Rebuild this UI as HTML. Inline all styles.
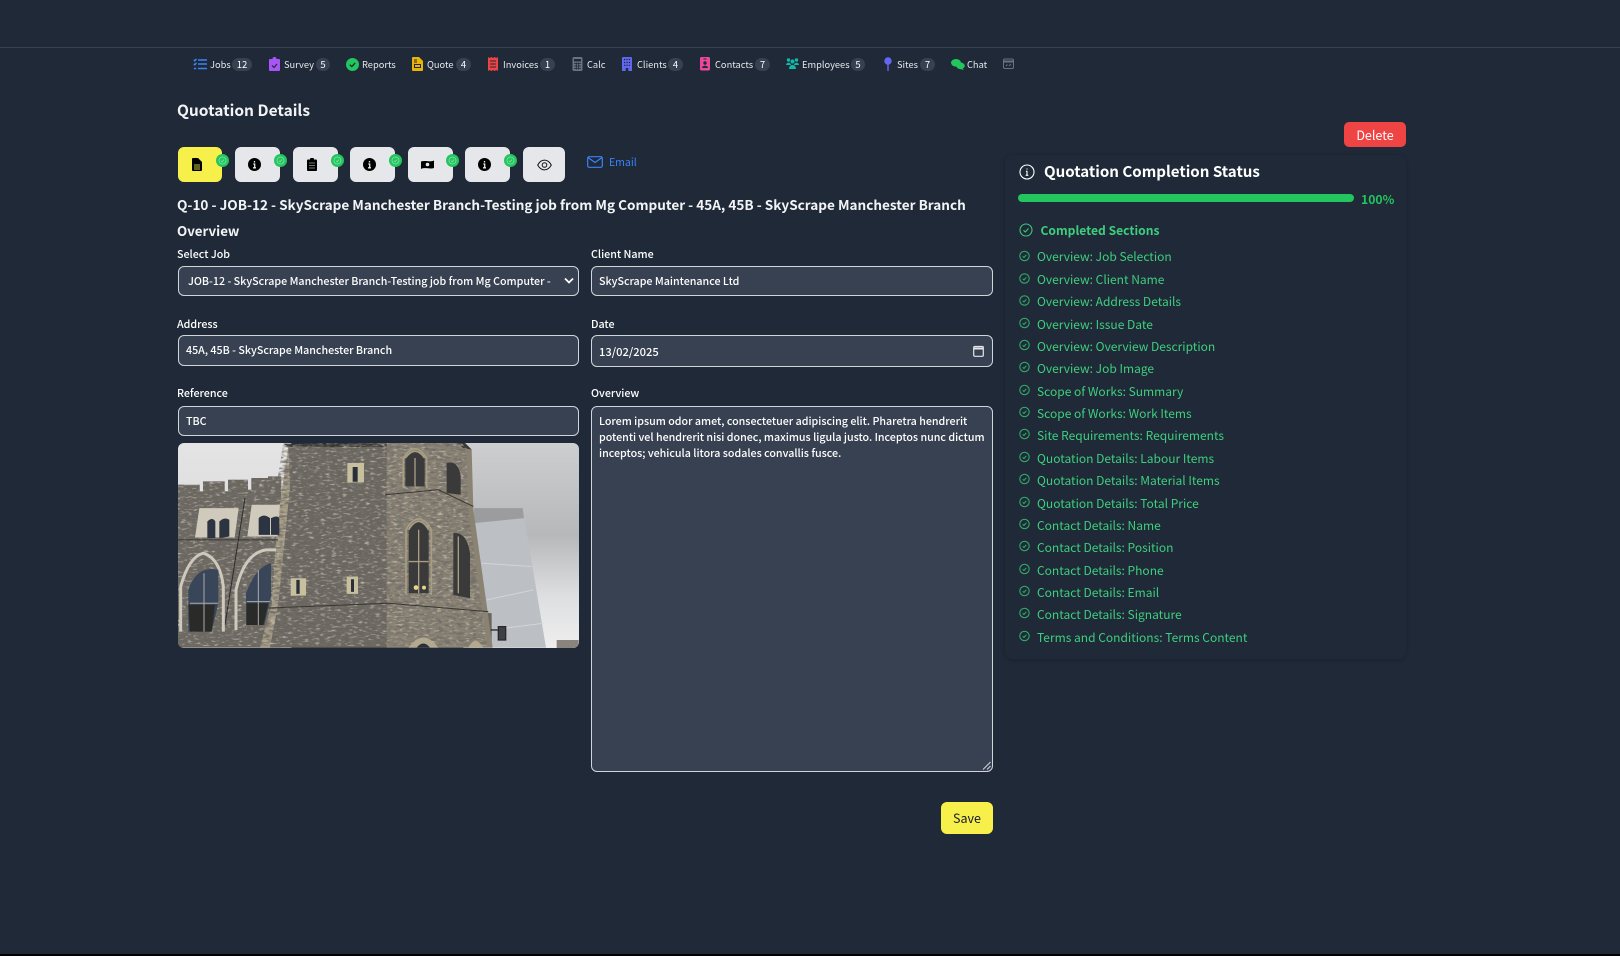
<!DOCTYPE html>
<html lang="en"><head><meta charset="utf-8"><title>Quotation Details</title>
<style>
*{box-sizing:border-box}
html,body{margin:0;padding:0;width:1620px;height:956px;overflow:hidden;background:#000}
body{font-family:"Noto Sans CJK JP","Liberation Sans",sans-serif;color:#fff}
#p{position:absolute;left:0;top:0;width:1620px;height:954px;background:#1f2937;overflow:hidden}
.a{position:absolute;white-space:nowrap;line-height:1}
.nt{font-size:9.3px;color:#e5e7eb;top:60px}
.bd{position:absolute;top:58px;height:13px;border-radius:7px;background:#374151;color:#fff;font-size:9.5px;line-height:13px;text-align:center}
.ic{position:absolute}
.lb{font-size:10.7px;font-weight:500;color:#fff}
.f{position:absolute;background:#374151;border:1px solid #d1d5db;border-radius:6px;color:#fff;font-size:10.7px;font-weight:500;line-height:1}
.f span{position:absolute;white-space:nowrap}
.tb{position:absolute;top:147px;height:35px;background:#e5e7eb;border-radius:6px}
.ck{position:absolute;top:153.5px;width:13px;height:13px;border-radius:50%;background:#22c55e}
.li{position:absolute;left:1037px;font-size:12px;color:#3ecf7e;white-space:nowrap;line-height:1}
</style></head><body><div id="p">
<div style="position:absolute;left:0;top:47px;width:1620px;height:1px;background:#374151"></div>

<!-- NAV -->
<svg class="ic" style="left:193px;top:58px" width="14" height="12" viewBox="0 0 14 12" fill="none" stroke="#3b82f6" stroke-width="1.5"><path d="M5 2h9M5 6h9M5 10.500h9M.8 1.800l1 1L3.500.8M.8 5.800l1 1 1.700-2M.8 10.500h2.500"/></svg>
<div class="a nt" style="left:210px">Jobs</div><div class="bd" style="left:232px;width:20px">12</div>
<svg class="ic" style="left:269px;top:57px" width="11" height="14" viewBox="0 0 11 14"><path d="M1 2h2.500a2 2 0 0 1 4 0H10a1 1 0 0 1 1 1v10a1 1 0 0 1-1 1H1a1 1 0 0 1-1-1V3a1 1 0 0 1 1-1z" fill="#a855f7"/><path d="M3 8.500l2 2 3-3.500" stroke="#1f2937" stroke-width="1.200" fill="none"/></svg>
<div class="a nt" style="left:284px">Survey</div><div class="bd" style="left:316px;width:14px">5</div>
<svg class="ic" style="left:346px;top:58px" width="13" height="13" viewBox="0 0 13 13"><circle cx="6.500" cy="6.500" r="6.500" fill="#22c55e"/><path d="M3.800 6.700l2 1.900 3.400-3.700" stroke="#1f2937" stroke-width="1.300" fill="none"/></svg>
<div class="a nt" style="left:362px">Reports</div>
<svg class="ic" style="left:412px;top:57px" width="11" height="14" viewBox="0 0 11 14"><path d="M1 0h6l4 4v9a1 1 0 0 1-1 1H1a1 1 0 0 1-1-1V1a1 1 0 0 1 1-1z" fill="#eab308"/><path d="M2 3h3M2 5h3M2.500 7.500h6v3h-6z" stroke="#1f2937" stroke-width="1" fill="none"/></svg>
<div class="a nt" style="left:427px">Quote</div><div class="bd" style="left:456px;width:15px">4</div>
<svg class="ic" style="left:488px;top:57px" width="10" height="14" viewBox="0 0 10 14"><path d="M0 0l1.700 1L3.300 0 5 1l1.700-1 1.600 1L10 0v14l-1.700-1-1.600 1L5 13l-1.700 1-1.600-1L0 14z" fill="#ef4444"/><path d="M2 4h6M2 7h6M2 10h6" stroke="#1f2937" stroke-width="1"/></svg>
<div class="a nt" style="left:503px">Invoices</div><div class="bd" style="left:540px;width:15px">1</div>
<svg class="ic" style="left:572px;top:57px" width="11" height="14" viewBox="0 0 11 14"><rect width="10" height="14" x=".5" rx="1.500" fill="#6b7280"/><rect x="2" y="2" width="7" height="2.500" fill="#1f2937"/><path d="M2 6.500h7M2 9h7M2 11.500h7M4.300 5.500v7M6.700 5.500v7" stroke="#1f2937" stroke-width=".8"/></svg>
<div class="a nt" style="left:587px">Calc</div>
<svg class="ic" style="left:622px;top:57px" width="10" height="14" viewBox="0 0 10 14"><path d="M1 0h8a1 1 0 0 1 1 1v13H6.300v-3H3.700v3H0V1a1 1 0 0 1 1-1z" fill="#6366f1"/><path d="M2 2.500h1.300M4.400 2.500h1.300M6.800 2.500h1.300M2 5.500h1.300M4.400 5.500h1.300M6.800 5.500h1.300M2 8.300h1.300M4.400 8.300h1.300M6.800 8.300h1.300" stroke="#1f2937" stroke-width="1.200"/></svg>
<div class="a nt" style="left:637px">Clients</div><div class="bd" style="left:668px;width:15px">4</div>
<svg class="ic" style="left:700px;top:57px" width="10" height="14" viewBox="0 0 10 14"><rect width="10" height="13.500" rx="1.500" fill="#ec4899"/><rect x="3.500" y="1.500" width="3" height="1" fill="#1f2937"/><circle cx="5" cy="6" r="1.700" fill="#1f2937"/><path d="M2 11c0-3 6-3 6 0z" fill="#1f2937"/></svg>
<div class="a nt" style="left:715px">Contacts</div><div class="bd" style="left:755px;width:15px">7</div>
<svg class="ic" style="left:786px;top:58px" width="13" height="11" viewBox="0 0 13 11" fill="#14b8a6"><circle cx="2.500" cy="2" r="1.700"/><circle cx="10.500" cy="2" r="1.700"/><circle cx="6.500" cy="3.500" r="2"/><path d="M0 7c0-3 5-3 5 0zM8 7c0-3 5-3 5 0zM3 11c0-5.500 7-5.500 7 0z"/></svg>
<div class="a nt" style="left:802px">Employees</div><div class="bd" style="left:851px;width:14px">5</div>
<svg class="ic" style="left:884px;top:57px" width="8" height="14" viewBox="0 0 8 14"><circle cx="4" cy="4" r="3.700" fill="#6366f1"/><rect x="3.300" y="7" width="1.400" height="7" fill="#6366f1"/></svg>
<div class="a nt" style="left:897px">Sites</div><div class="bd" style="left:920px;width:15px">7</div>
<svg class="ic" style="left:951px;top:59px" width="14" height="11" viewBox="0 0 14 11" fill="#22c55e"><ellipse cx="5" cy="3.800" rx="5" ry="3.800"/><ellipse cx="9.500" cy="6.800" rx="4.300" ry="3.300"/><path d="M11 9l2 2-4-1z"/></svg>
<div class="a nt" style="left:967px">Chat</div>
<svg class="ic" style="left:1003px;top:58px" width="11" height="11" viewBox="0 0 11 11" fill="none" stroke="#6b7280"><rect x=".5" y="1" width="10" height="9.500" rx="1.500"/><path d="M1 3.500h9" stroke-width="2"/><path d="M3 8l1.500-1.500M6 8l2-2"/></svg>

<div class="a" style="left:177px;top:103px;font-size:15.500px;font-weight:700;color:#f3f4f6">Quotation Details</div>

<!-- TABS -->
<div class="tb" style="left:178px;width:44px;background:#f8f04a"></div>
<div class="tb" style="left:235px;width:45px"></div>
<div class="tb" style="left:293px;width:45px"></div>
<div class="tb" style="left:350px;width:45px"></div>
<div class="tb" style="left:408px;width:45px"></div>
<div class="tb" style="left:465px;width:45px"></div>
<div class="tb" style="left:523px;width:42px"></div>
<svg class="ic" style="left:191.500px;top:157.500px" width="10" height="13" viewBox="0 0 10 13"><path d="M1 0h5l4 4v8a1 1 0 0 1-1 1H1a1 1 0 0 1-1-1V1a1 1 0 0 1 1-1z"/><path d="M2 7h6M2 9h6M2 11h6" stroke="#c4bd3c"/></svg>
<svg class="ic" style="left:248px;top:158px" width="13" height="13" viewBox="0 0 13 13"><circle cx="6.500" cy="6.500" r="6.500"/><path d="M6.500 3v1.500M5.300 6h1.400v3.500M5 9.800h3" stroke="#e5e7eb" stroke-width="1.300" fill="none"/></svg>
<svg class="ic" style="left:307px;top:158px" width="10" height="13" viewBox="0 0 10 13"><path d="M1 1.500h2a2 2 0 0 1 4 0h2a1 1 0 0 1 1 1V12a1 1 0 0 1-1 1H1a1 1 0 0 1-1-1V2.500a1 1 0 0 1 1-1z"/><path d="M2 5h6M2 7.500h6M2 10h6" stroke="#777" stroke-width=".9"/></svg>
<svg class="ic" style="left:363px;top:158px" width="13" height="13" viewBox="0 0 13 13"><circle cx="6.500" cy="6.500" r="6.500"/><path d="M6.500 3v1.500M5.300 6h1.400v3.500M5 9.800h3" stroke="#e5e7eb" stroke-width="1.300" fill="none"/></svg>
<svg class="ic" style="left:421px;top:160px" width="13" height="9" viewBox="0 0 13 9"><path d="M0 1.500c4-1.500 9 1 13-1V8c-4 1.500-9-1-13 1z"/><circle cx="6.500" cy="4.500" r="1.800" fill="#e5e7eb"/></svg>
<svg class="ic" style="left:478px;top:158px" width="13" height="13" viewBox="0 0 13 13"><circle cx="6.500" cy="6.500" r="6.500"/><path d="M6.500 3v1.500M5.300 6h1.400v3.500M5 9.800h3" stroke="#e5e7eb" stroke-width="1.300" fill="none"/></svg>
<svg class="ic" style="left:536.500px;top:159px" width="15" height="12" viewBox="0 0 15 12" fill="none" stroke="#111" stroke-width="1"><path d="M.7 6c3.500-6.500 10-6.500 13.600 0-3.600 6.500-10.100 6.500-13.600 0z"/><circle cx="7.500" cy="6" r="2.300"/></svg>
<div class="ck" style="left:216px"></div><div class="ck" style="left:274px"></div><div class="ck" style="left:331px"></div><div class="ck" style="left:389px"></div><div class="ck" style="left:446px"></div><div class="ck" style="left:504px"></div>
<svg class="ic" style="left:216px;top:153.500px" width="299" height="13" viewBox="0 0 299 13" fill="none" stroke="#8ce0ae" stroke-width=".8"><g id="c"><circle cx="6.500" cy="6.500" r="3.500"/><path d="M5 6.800l1.200 1L8 5.500"/></g><g transform="translate(58)"><circle cx="6.500" cy="6.500" r="3.500"/><path d="M5 6.800l1.200 1L8 5.500"/></g><g transform="translate(115)"><circle cx="6.500" cy="6.500" r="3.500"/><path d="M5 6.800l1.200 1L8 5.500"/></g><g transform="translate(173)"><circle cx="6.500" cy="6.500" r="3.500"/><path d="M5 6.800l1.200 1L8 5.500"/></g><g transform="translate(230)"><circle cx="6.500" cy="6.500" r="3.500"/><path d="M5 6.800l1.200 1L8 5.500"/></g><g transform="translate(288)"><circle cx="6.500" cy="6.500" r="3.500"/><path d="M5 6.800l1.200 1L8 5.500"/></g></svg>
<svg class="ic" style="left:587px;top:156px" width="16" height="12" viewBox="0 0 16 12" fill="none" stroke="#3b82f6" stroke-width="1.200"><rect x=".7" y=".7" width="14.600" height="10.600" rx="1.500"/><path d="M1 1.500l7 5 7-5"/></svg>
<div class="a" style="left:609px;top:158px;font-size:10.500px;color:#3b82f6">Email</div>

<div class="a" style="left:177px;top:198px;font-size:13.550px;font-weight:600;color:#f3f4f6">Q-10 - JOB-12 - SkyScrape Manchester Branch-Testing job from Mg Computer - 45A, 45B - SkyScrape Manchester Branch</div>
<div class="a" style="left:177px;top:224px;font-size:13.300px;font-weight:600;color:#f3f4f6">Overview</div>

<!-- FORM -->
<div class="a lb" style="left:177px;top:250px">Select Job</div>
<div class="a lb" style="left:591px;top:250px">Client Name</div>
<div class="f" style="left:178px;top:266px;width:401px;height:30px"><span style="left:9px;top:10px">JOB-12 - SkyScrape Manchester Branch-Testing job from Mg Computer -</span>
<svg style="position:absolute;right:4px;top:10px" width="10" height="8" viewBox="0 0 10 8" fill="none" stroke="#fff" stroke-width="1.800"><path d="M1 1.500l4 4 4-4"/></svg></div>
<div class="f" style="left:591px;top:266px;width:402px;height:30px"><span style="left:7px;top:10px">SkyScrape Maintenance Ltd</span></div>

<div class="a lb" style="left:177px;top:320px">Address</div>
<div class="a lb" style="left:591px;top:320px">Date</div>
<div class="f" style="left:178px;top:335px;width:401px;height:31px"><span style="left:7px;top:10px">45A, 45B - SkyScrape Manchester Branch</span></div>
<div class="f" style="left:591px;top:335px;width:402px;height:32px"><span style="left:7px;top:11px;font-size:11.200px">13/02/2025</span>
<svg style="position:absolute;right:8px;top:9px" width="11" height="12" viewBox="0 0 11 12" fill="none" stroke="#e5e7eb" stroke-width="1.200"><rect x=".7" y="1.500" width="9.600" height="9.800" rx="1"/><path d="M.7 3.500h9.600" stroke-width="2"/></svg></div>

<div class="a lb" style="left:177px;top:389px">Reference</div>
<div class="a lb" style="left:591px;top:389px">Overview</div>
<div class="f" style="left:178px;top:406px;width:401px;height:30px"><span style="left:7px;top:10px">TBC</span></div>
<div class="f" style="left:591px;top:406px;width:402px;height:366px"><span style="left:7px;top:7px;line-height:16px">Lorem ipsum odor amet, consectetuer adipiscing elit. Pharetra hendrerit<br>potenti vel hendrerit nisi donec, maximus ligula justo. Inceptos nunc dictum<br>inceptos; vehicula litora sodales convallis fusce.</span>
<svg style="position:absolute;right:1px;bottom:1px" width="9" height="9" viewBox="0 0 9 9" stroke="#d1d5db" stroke-width="1"><path d="M1 8.500L8.500 1M5 8.500L8.500 5"/></svg></div>

<!-- PHOTO -->
<svg style="position:absolute;left:178px;top:443px;border-radius:6px" width="401" height="205" viewBox="24 40 1203 614" preserveAspectRatio="none">
<defs>
<linearGradient id="sk" x1="0" y1="0" x2="0" y2="1"><stop offset="0" stop-color="#cdced0"/><stop offset=".45" stop-color="#b6b8ba"/><stop offset=".75" stop-color="#dedfe0"/><stop offset="1" stop-color="#eeeeef"/></linearGradient>
<linearGradient id="sl" x1="0" y1="0" x2="0" y2="1"><stop offset="0" stop-color="#e4e4e4"/><stop offset="1" stop-color="#d2d2d2"/></linearGradient>
<filter id="st" x="0" y="0" width="100%" height="100%"><feTurbulence type="fractalNoise" baseFrequency=".05 .14" numOctaves="2" seed="4"/><feColorMatrix values="0 0 0 0 .16  0 0 0 0 .15  0 0 0 0 .14  2.600 0 0 0 -1"/><feComposite in2="SourceGraphic" operator="in"/></filter>
<filter id="sb" x="0" y="0" width="100%" height="100%"><feTurbulence type="fractalNoise" baseFrequency=".06 .16" numOctaves="2" seed="11"/><feColorMatrix values="0 0 0 0 .7  0 0 0 0 .67  0 0 0 0 .6  0 2.200 0 0 -1.200"/><feComposite in2="SourceGraphic" operator="in"/></filter>
<clipPath id="cw"><path d="M24 165h65v20h10v-30h65v30h10v-35h60v30h10v-35h50v-5h30l15-95 295-10h235l20 20 5 180 58 413H24z"/></clipPath>
</defs>
<rect x="24" y="40" width="340" height="614" fill="url(#sl)"/>
<rect x="880" y="40" width="350" height="614" fill="url(#sk)"/>
<path d="M912 235h146l70 418H960z" fill="#bcbfc4"/><path d="M912 235h146l4 30-150 15z" fill="#9b9c9d"/>
<path d="M935 400l150 10M950 510l140-30M960 600l160-20" stroke="#d2d4d8" stroke-width="3" fill="none"/>
<path d="M1160 630h66v24h-66z" fill="#8a857c"/>
<path d="M24 165h65v20h10v-30h65v30h10v-35h60v30h10v-35h50v-5h40V653H24z" fill="#6b675f"/>
<path d="M355 50l295-10 5 480 310 30V653H270l15-130 50-210z" fill="#6a665e"/>
<path d="M650 40h235l20 20 5 180 58 413H650z" fill="#8a8272"/>
<path d="M340 42h310v10H355z" fill="#3b3833"/><path d="M860 40h25l20 20-25-5z" fill="#3b3833"/>
<path d="M355 52l-30 200-10 120-10 150-35 130h30l25-130 15-150 20-200z" fill="#a69c83"/>
<rect x="24" y="40" width="1203" height="614" fill="#000" filter="url(#st)" clip-path="url(#cw)"/>
<rect x="24" y="40" width="1203" height="614" fill="#fff" filter="url(#sb)" clip-path="url(#cw)"/>
<path d="M24 330h300M280 535l375-15 300 25M645 195l160-15 105 50" stroke="#3a3732" stroke-width="3" fill="none"/>
<path d="M225 205l-60 380" stroke="#2d2b28" stroke-width="3"/>
<g fill="#c8bf9f"><path d="M532 100h50v58h-50zM362 445h46v52h-46zM530 440h34v52h-34z"/></g>
<g fill="#29303a"><path d="M548 112h15v44h-15zM379 450h10v42h-10zM543 448h9v38h-9z"/></g>
<g fill="#cfcabc"><path d="M88 235h118l-12 88H75zM245 225h85l-8 95h-90z"/></g>
<g fill="#2b3440"><path d="M112 325v-50q15-15 24 0v50zM148 325v-50q15-15 30-5v50zM266 315v-50q15-15 34 0v50z"/><path d="M303 315v-50q20-10 25 0v50z"/></g>
<g fill="none" stroke="#cdc9bd" stroke-width="9"><path d="M32 605V470q25-90 68-100 50 15 60 100v135"/><path d="M198 600V480q25-110 90-120h30"/></g>
<g fill="#39465a"><path d="M55 605V480q25-75 90-60v100l-20 85z"/><path d="M228 585V490q30-80 75-90v100l-20 85z"/></g>
<path d="M55 525h80l-10 80H60zM230 520h65l-15 65h-50z" fill="#2a2a28"/>
<path d="M60 520h85M230 515h70M102 430v175M265 420v165" stroke="#aaa" stroke-width="3"/>
<g fill="#3a3a3a"><path d="M706 170V85q30-40 58 0v85z"/><path d="M830 190V100q35-10 42 40v55z"/><path d="M716 490V300q30-50 60 0v190z"/><path d="M850 495V310q40-5 50 60v135z"/></g>
<path d="M706 85q30-40 58 0M716 300q30-50 60 0M700 175V85q35-55 70 0v90M708 495V300q38-65 76 0v195" stroke="#a89e84" stroke-width="5" fill="none"/>
<path d="M735 85v85M746 300v190M716 395h60M865 320v170" stroke="#a89e84" stroke-width="4"/>
<circle cx="738" cy="473" r="7" fill="#e6d78a"/><circle cx="762" cy="473" r="6" fill="#e6d78a"/>
<path d="M715 653q45-60 90 0zM895 653q20-40 45 0z" fill="#b3a98e"/><path d="M740 653q20-25 40 0z" fill="#2d3137"/>
<path d="M962 600h25M985 590h22v40h-22z" stroke="#28282a" stroke-width="4" fill="#3d4147"/>
</svg>

<div style="position:absolute;left:941px;top:802px;width:52px;height:32px;border-radius:6px;background:#f8f04a;color:#111827;font-size:12.500px;line-height:32px;text-align:center">Save</div>
<div style="position:absolute;left:1344px;top:122px;width:62px;height:25px;border-radius:5px;background:#ef4444;color:#fff;font-size:12.500px;line-height:25px;text-align:center">Delete</div>

<!-- PANEL -->
<div style="position:absolute;left:1005px;top:155px;width:401px;height:504px;border-radius:8px;background:#1f2937;box-shadow:0 1px 5px rgba(0,0,0,.18)"></div>
<svg class="ic" style="left:1019px;top:164px" width="16" height="16" viewBox="0 0 16 16" fill="none" stroke="#fff" stroke-width="1.100"><circle cx="8" cy="8" r="7"/><path d="M8 4.500v1M7 7.300h1v4M6.700 11.300h2.600"/></svg>
<div class="a" style="left:1044px;top:164px;font-size:15.100px;font-weight:700;color:#fff">Quotation Completion Status</div>
<div style="position:absolute;left:1018px;top:194px;width:336px;height:8px;border-radius:4px;background:#22c55e"></div>
<div class="a" style="left:1361px;top:193px;font-size:12.200px;font-weight:600;color:#22c55e">100%</div>
<svg class="ic" style="left:1019px;top:223px" width="14" height="14" viewBox="0 0 14 14" fill="none" stroke="#3cc878" stroke-width="1.100"><circle cx="7" cy="7" r="6"/><path d="M4.500 7.300l1.800 1.700 3.200-3.500"/></svg>
<div class="a" style="left:1040.500px;top:225px;font-size:12.100px;font-weight:600;color:#3ecf7e">Completed Sections</div>

<svg class="ic" style="left:1019px;top:250px" width="12" height="400" viewBox="0 0 12 400" fill="none" stroke="#31a866" stroke-width="1.100">
<g id="r"><circle cx="5.500" cy="6" r="4.700"/><path d="M3.700 6.300l1.300 1.200 2.300-2.700"/></g>
<use href="#r" y="22.500"/><use href="#r" y="44.500"/><use href="#r" y="67"/><use href="#r" y="89"/><use href="#r" y="111"/><use href="#r" y="134"/><use href="#r" y="156"/><use href="#r" y="178"/><use href="#r" y="201"/><use href="#r" y="223"/><use href="#r" y="246"/><use href="#r" y="268"/><use href="#r" y="290"/><use href="#r" y="313"/><use href="#r" y="335"/><use href="#r" y="357"/><use href="#r" y="380"/>
</svg>
<div class="li" style="top:251px">Overview: Job Selection</div>
<div class="li" style="top:274px">Overview: Client Name</div>
<div class="li" style="top:296px">Overview: Address Details</div>
<div class="li" style="top:319px">Overview: Issue Date</div>
<div class="li" style="top:341px">Overview: Overview Description</div>
<div class="li" style="top:363px">Overview: Job Image</div>
<div class="li" style="top:386px">Scope of Works: Summary</div>
<div class="li" style="top:408px">Scope of Works: Work Items</div>
<div class="li" style="top:430px">Site Requirements: Requirements</div>
<div class="li" style="top:453px">Quotation Details: Labour Items</div>
<div class="li" style="top:475px">Quotation Details: Material Items</div>
<div class="li" style="top:498px">Quotation Details: Total Price</div>
<div class="li" style="top:520px">Contact Details: Name</div>
<div class="li" style="top:542px">Contact Details: Position</div>
<div class="li" style="top:565px">Contact Details: Phone</div>
<div class="li" style="top:587px">Contact Details: Email</div>
<div class="li" style="top:609px">Contact Details: Signature</div>
<div class="li" style="top:632px">Terms and Conditions: Terms Content</div>
</div></body></html>
